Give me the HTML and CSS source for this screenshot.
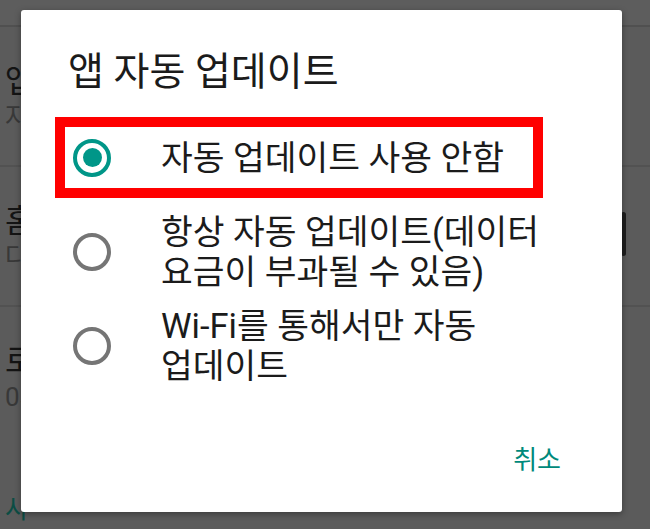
FILE: index.html
```html
<!DOCTYPE html>
<html lang="ko">
<head>
    <meta charset="UTF-8">
    <title>앱 자동 업데이트</title>
    <link rel="stylesheet" href="styles.css">
</head>
<body>
<div class="page">
    <div class="appbar"></div>
    <ul class="settings">
        <li>
            <p class="name">앱 자동 업데이트</p>
            <p class="desc">자동 업데이트 사용 안함</p>
        </li>
        <li>
            <p class="name">홈 화면에 아이콘 추가</p>
            <p class="desc">다운로드한 새 앱</p>
        </li>
        <li>
            <p class="name">로컬 검색 기록 삭제</p>
            <p class="desc">0개의 검색어가 저장되어 있음</p>
        </li>
    </ul>
    <p class="section">사용자 컨트롤</p>
    <div class="thumb"></div>
</div>

<div class="dialog">
    <h1 class="title">앱 자동 업데이트</h1>
    <ul class="options">
        <li class="option highlight">
            <span class="radio checked"></span>
            <span class="label">자동 업데이트 사용 안함</span>
        </li>
        <li class="option">
            <span class="radio"></span>
            <span class="label">항상 자동 업데이트(데이터 요금이 부과될 수 있음)</span>
        </li>
        <li class="option">
            <span class="radio"></span>
            <span class="label">Wi-Fi를 통해서만 자동 업데이트</span>
        </li>
    </ul>
    <div class="buttons">
        <span class="btn">취소</span>
    </div>
</div>
</body>
</html>
```

FILE: styles.css
```css
* {
    margin: 0;
    padding: 0;
    box-sizing: border-box;
}

ul {
    list-style: none
}

html, body {
    width: 650px;
    height: 529px;
    overflow: hidden;
}

body {
    position: relative;
    background-color: #5b5b5b;
    font-family: Roboto, "Noto Sans CJK KR", sans-serif;
    color: #1c1c1c;
}

/* 뒤에 깔린 설정 화면 (어둡게 처리됨) */
.page {
    height: 529px;
}

.appbar {
    height: 27px;
    background-color: #5d5d5d;
    border-bottom: 2px solid #505050;
}

.settings li {
    height: 140px;
    padding: 34px 0 0 5px;
    border-bottom: 2px solid #525252;
    overflow: hidden;
}

.settings li:last-child {
    border-bottom: none;
}

/* 다이얼로그 뒤에 가려지는 부분은 잘라냄 */
.settings p, .section {
    width: 21px;
    overflow: hidden;
    white-space: nowrap;
}

.settings .name {
    font-size: 32px;
    line-height: 40px;
    color: #141414;
}

.settings .desc {
    font-size: 26px;
    line-height: 32px;
    color: #383838;
}

.section {
    margin-top: 46px;
    padding-left: 5px;
    width: 26px;
    font-size: 26px;
    line-height: 32px;
    color: #0b4d44;
}

.thumb {
    position: absolute;
    left: 621px;
    top: 212px;
    width: 5px;
    height: 44px;
    border-radius: 3px;
    background-color: #1e1e1e;
}

/* 다이얼로그 */
.dialog {
    position: absolute;
    left: 21px;
    top: 10px;
    width: 601px;
    height: 502px;
    display: flex;
    flex-direction: column;
    padding-top: 40px;
    background-color: #fff;
    border-radius: 3px;
    box-shadow: 0 2px 6px rgba(0, 0, 0, .35);
}

.title {
    padding-left: 47px;
    font-size: 39px;
    line-height: 44px;
    font-weight: normal;
    color: #1b1b1b;
}

.options {
    margin-top: 23px;
}

.option {
    display: flex;
    align-items: center;
    gap: 50px;
    padding: 7px 0 7px 52px;
}

.option.highlight {
    width: 488px;
    height: 81px;
    margin: 0 0 7px 34px;
    padding: 0 0 0 8px;
    border: 10px solid #ff0000;
}

.radio {
    flex: none;
    position: relative;
    width: 38px;
    height: 38px;
    border: 4px solid #757575;
    border-radius: 50%;
}

.radio.checked {
    border-color: #009688;
}

.radio.checked::after {
    content: "";
    position: absolute;
    left: 5.5px;
    top: 5.5px;
    width: 19px;
    height: 19px;
    border-radius: 50%;
    background-color: #009688;
}

.label {
    width: 410px;
    font-size: 34.5px;
    line-height: 40px;
    color: #1b1b1b;
    word-break: keep-all;
}

.buttons {
    margin-top: auto;
    display: flex;
    justify-content: flex-end;
    padding: 0 45px 26px 0;
}

.btn {
    padding: 8px 16px;
    font-size: 26px;
    line-height: 36px;
    color: #00897b;
    cursor: pointer;
}
```
